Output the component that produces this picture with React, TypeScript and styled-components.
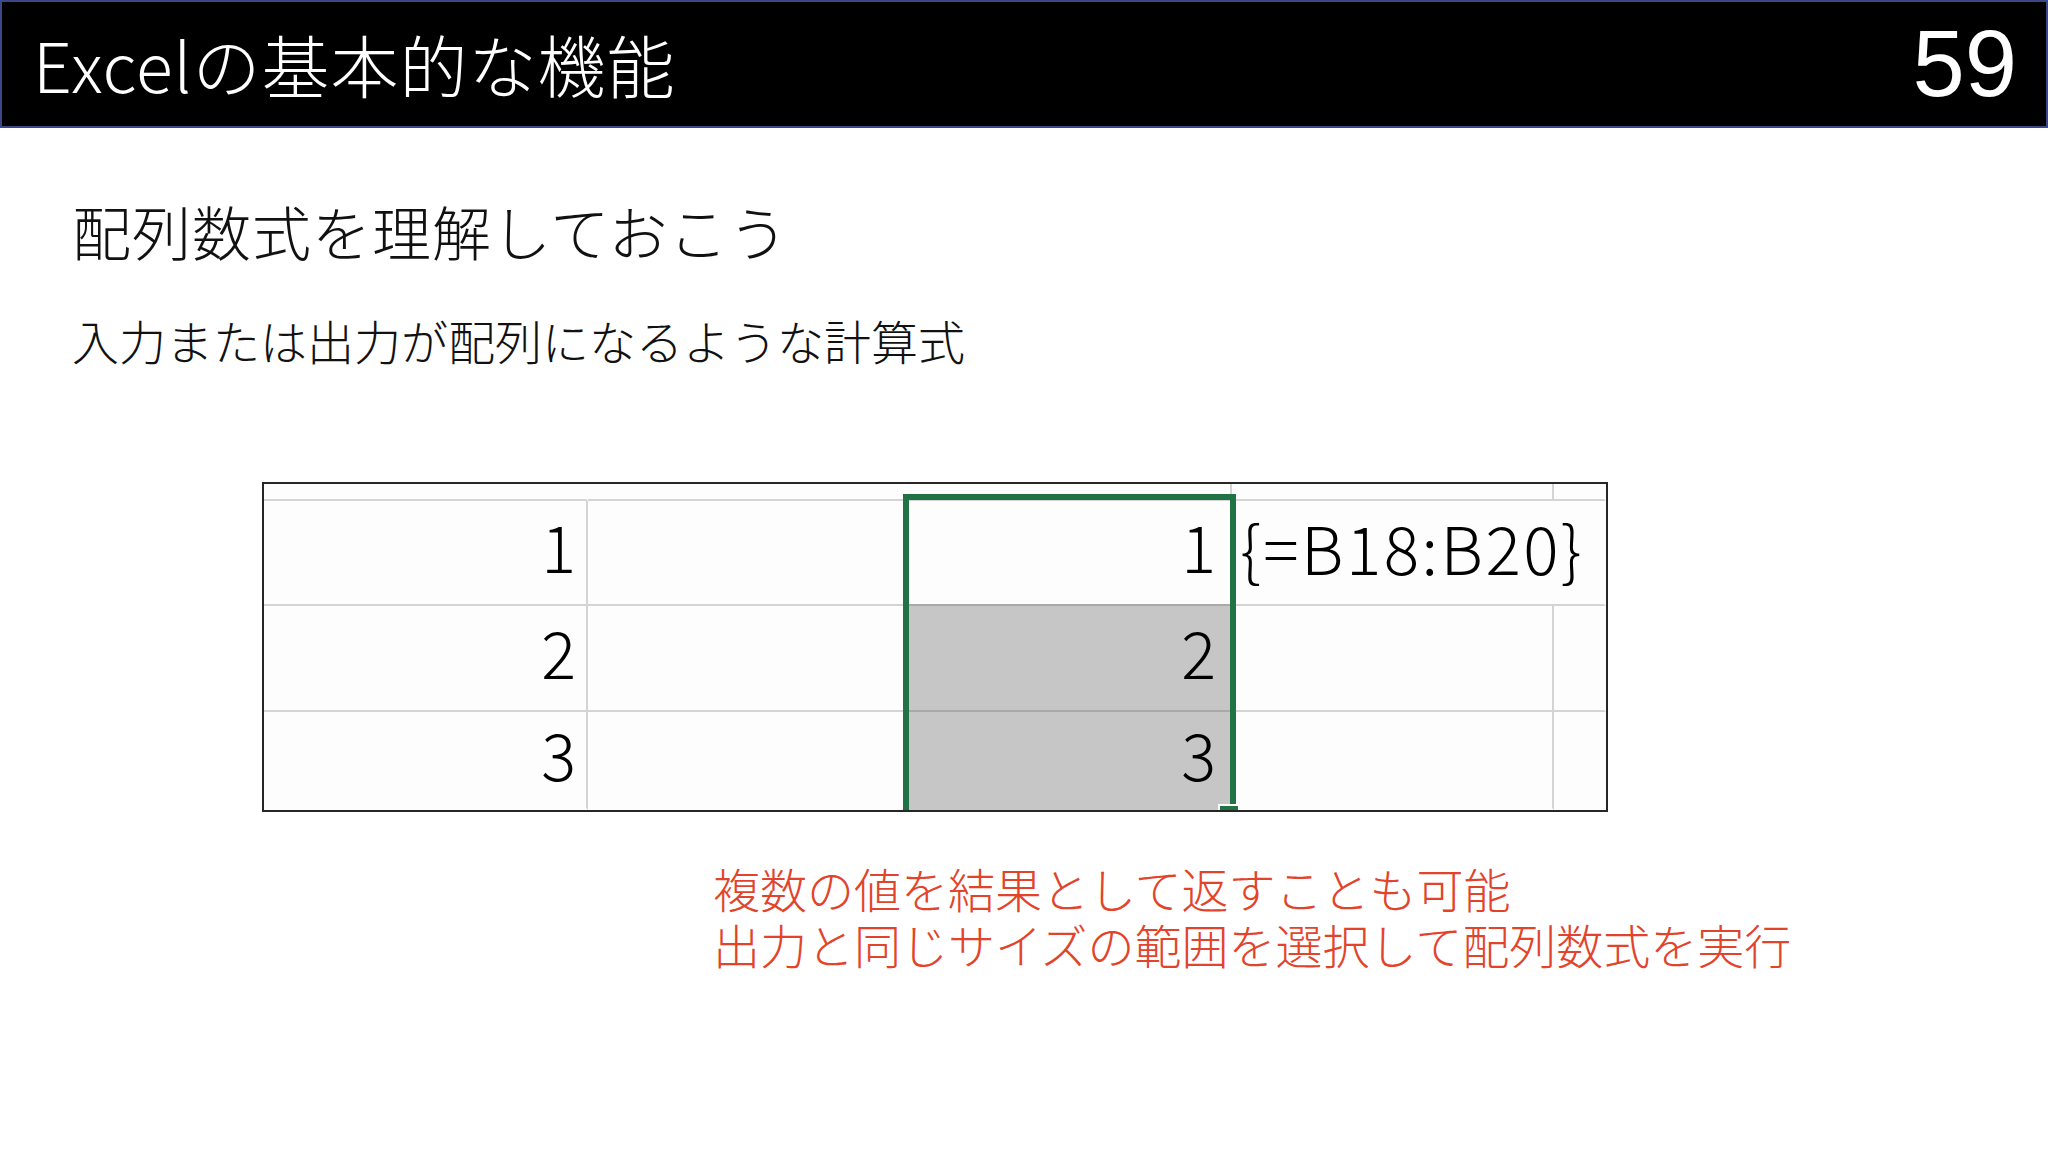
import React from "react";
import styled, { createGlobalStyle } from "styled-components";

const GlobalStyle = createGlobalStyle`
  html, body {
    margin: 0;
    padding: 0;
    background: #ffffff;
  }
  body {
    width: 2048px;
    height: 1152px;
    overflow: hidden;
    font-family: "Noto Sans CJK JP", "Noto Sans", sans-serif;
  }
`;

const Slide = styled.div`
  width: 2048px;
  height: 1152px;
  display: flex;
  flex-direction: column;
  background: #ffffff;
`;

const Header = styled.header`
  box-sizing: border-box;
  height: 128px;
  background: #000;
  border: 2px solid #3a4788;
  display: flex;
  align-items: center;
  justify-content: space-between;
  padding: 0 29px 0 31px;
`;

const Title = styled.h1`
  margin: 0;
  color: #fff;
  font-family: "Noto Sans CJK JP", sans-serif;
  font-weight: 300;
  font-size: 68px;
  letter-spacing: 1px;
  line-height: 1;
`;

const PageNo = styled.div`
  color: #fff;
  font-family: "Liberation Sans", Arial, sans-serif;
  font-size: 94px;
  line-height: 1;
`;

const Content = styled.main`
  display: flex;
  flex-direction: column;
  align-items: flex-start;
  padding-left: 72px;
`;

const Heading = styled.h2`
  margin: 68px 0 0;
  font-weight: 300;
  font-size: 59px;
  letter-spacing: 1px;
  line-height: 70px;
  color: #111;
`;

const Lead = styled.p`
  margin: 46px 0 0;
  font-weight: 300;
  font-size: 47px;
  line-height: 56px;
  color: #111;
`;

/* spreadsheet capture */
const Sheet = styled.div`
  position: relative;
  overflow: hidden;
  margin: 114px 0 0 190px;
  width: 1342px;
  height: 326px;
  border: 2px solid #262626;
  background: #fdfdfd;
  display: grid;
  grid-template-columns: 324px 317px 327px 322px 52px;
  grid-template-rows: 17px 105px 106px 98px;
`;

const Cell = styled.div<{
  $right?: boolean;
  $bottom?: boolean;
  $filled?: boolean;
  $dark?: boolean;
  $span?: number;
  $pad?: number;
}>`
  box-sizing: border-box;
  grid-column: span ${(p) => p.$span ?? 1};
  border-right: 2px solid ${(p) => (p.$right ? "#d4d4d4" : "transparent")};
  border-bottom: 2px solid
    ${(p) => (p.$bottom ? (p.$dark ? "#a9a9a9" : "#d4d4d4") : "transparent")};
  background: ${(p) => (p.$filled ? "#c6c6c6" : "transparent")};
  display: flex;
  align-items: center;
  justify-content: flex-end;
  padding-right: ${(p) => p.$pad ?? 10}px;
  padding-bottom: 14px;
  font-weight: 300;
  font-size: 65px;
  line-height: 1;
  color: #000;
  white-space: nowrap;
`;

const Formula = styled(Cell)`
  justify-content: flex-start;
  padding-left: 8px;
  padding-right: 0;
  font-size: 66px;
  letter-spacing: 2.5px;
`;

const Selection = styled.div`
  position: absolute;
  left: 639px;
  top: 10px;
  width: 333px;
  height: 400px;
  box-sizing: border-box;
  border: 6px solid #217346;
  pointer-events: none;
`;

const FillHandle = styled.div`
  position: absolute;
  left: 954px;
  top: 320px;
  width: 18px;
  height: 18px;
  background: #217346;
  border: 2px solid #fff;
`;

const Note = styled.div`
  margin: 48px 0 0 641px;
  font-weight: 300;
  font-size: 47px;
  line-height: 56px;
  color: #e2442b;
`;

const NoteLine = styled.div`
  white-space: nowrap;
`;

const rows = [1, 2, 3];

export default function App() {
  return (
    <>
      <GlobalStyle />
      <Slide>
        <Header>
          <Title>Excelの基本的な機能</Title>
          <PageNo>59</PageNo>
        </Header>
        <Content>
          <Heading>配列数式を理解しておこう</Heading>
          <Lead>入力または出力が配列になるような計算式</Lead>
          <Sheet>
            <Cell $bottom />
            <Cell $bottom />
            <Cell $bottom $right />
            <Cell $bottom $right />
            <Cell $bottom />
            {rows.map((n, i) => {
              const last = i === rows.length - 1;
              return (
                <React.Fragment key={n}>
                  <Cell $right $bottom={!last}>
                    {n}
                  </Cell>
                  <Cell $right $bottom={!last} />
                  <Cell
                    $right
                    $bottom={!last}
                    $dark={i < 2}
                    $filled={i > 0}
                    $pad={14}
                  >
                    {n}
                  </Cell>
                  {i === 0 ? (
                    <Formula $span={2} $bottom>
                      {"{=B18:B20}"}
                    </Formula>
                  ) : (
                    <>
                      <Cell $right $bottom={!last} />
                      <Cell $bottom={!last} />
                    </>
                  )}
                </React.Fragment>
              );
            })}
            <Selection />
            <FillHandle />
          </Sheet>
          <Note>
            <NoteLine>複数の値を結果として返すことも可能</NoteLine>
            <NoteLine>出力と同じサイズの範囲を選択して配列数式を実行</NoteLine>
          </Note>
        </Content>
      </Slide>
    </>
  );
}
